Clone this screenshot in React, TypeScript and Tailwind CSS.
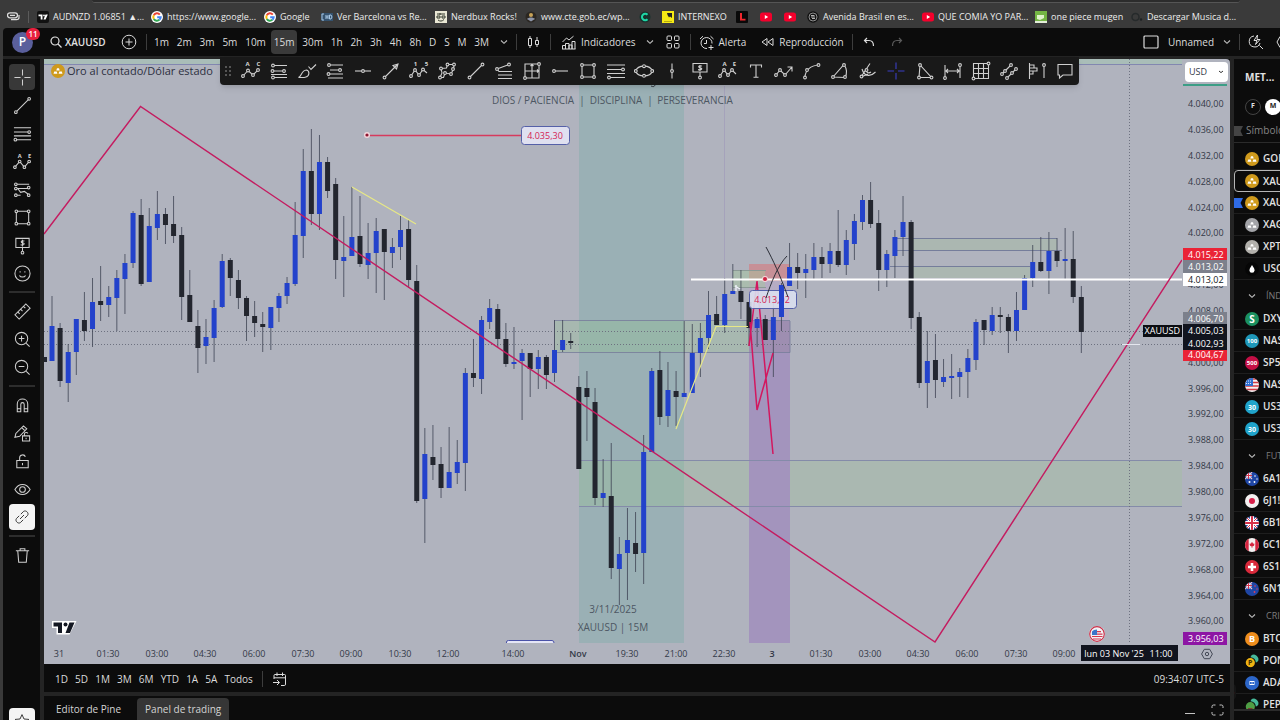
import React from "react";

type Pt = [number, number];

/* ---------- icon helper ---------- */

interface Glyph {
  name: string;
  d: string;
  dots?: Pt[];
  marks?: [string, number, number][];
  tone?: string;
}

function Draw({ g, className = "size-5" }: { g: Glyph; className?: string }) {
  return (
    <svg viewBox="0 0 20 20" className={className} fill="none" stroke={g.tone ?? "#cfcfcf"} strokeWidth="1.1" aria-hidden="true">
      <path d={g.d} />
      {g.dots?.map(([x, y], i) => <circle key={i} cx={x} cy={y} r="1.4" fill="#141414" />)}
      {g.marks?.map(([t, x, y]) => (
        <text key={t} x={x} y={y} fontSize="6" fontWeight="700" textAnchor="middle" fill="#d6d6d6" stroke="none">{t}</text>
      ))}
    </svg>
  );
}

function Chevron() {
  return (
    <svg viewBox="0 0 8 8" className="size-2 shrink-0" fill="none" stroke="#bdbdbd" strokeWidth="1.1" aria-hidden="true">
      <path d="M1 2.5 4 5.3 7 2.5" />
    </svg>
  );
}

/* ---------- drawing tools ---------- */

const favourites: Glyph[] = [
  { name: "Patrón ABC", d: "M2 15 7 9.5 12 14 17 9", dots: [[2, 15], [7, 9.5], [12, 14], [17, 9]], marks: [["A", 6.5, 5], ["C", 17.5, 5]] },
  { name: "Retroceso de Fibonacci", d: "M4 4.5H18M4 10H15M2 13.5H18M4 16.5H18", dots: [[4, 4.5], [3.5, 10], [15, 10], [4, 16.5]] },
  { name: "Pincel", d: "M1.500 16.500C5 15 4 9.500 9.500 9 13 10 12.500 15 9 16 7 16.800 4 16.500 1.500 16.500ZM11.500 5.500 14 8.500 19 3.500" },
  { name: "Extensión de Fibonacci", d: "M3 4H18M5 9H17M3 13H18M3 17H18", dots: [[4, 4], [15, 9], [3.5, 13]] },
  { name: "Línea horizontal", d: "M2 10H18", dots: [[10, 10]] },
  { name: "Flecha", d: "M3.500 16.500 17 3M12 4.500 17 3 15.500 8Z", dots: [[3.5, 16.5]] },
  { name: "Impulso de Elliott", d: "M2 15 6 9 10 14 14 8.500 18 12", dots: [[2, 15], [6, 9], [10, 14], [14, 8.5]], marks: [["1", 6.5, 5], ["5", 17.5, 5]] },
  { name: "Polilínea", d: "M4 7.500 9.500 7 10.500 3.500 17 3.500 16.500 8 14 13 8 12 6.500 16.500 3 16.500 5 12Z", dots: [[4, 7.5], [10.5, 3.5], [17, 3.5], [14, 13], [8, 12], [3, 16.5], [16, 8]] },
  { name: "Línea de tendencia", d: "M3.500 16.500 16.500 3.500", dots: [[3.5, 16.5], [16.5, 3.5]] },
  { name: "Tridente", d: "M3 8 15 3.500M3 8 5 10.500H18M4 14H18M4 17.500H18", dots: [[3, 8], [15, 3.5]] },
  { name: "Cuadrícula de Gann", d: "M3 3H17V17H3ZM10 3V17M3 10H17M8.500 5 10 3.500 11.500 5M15 8.500 16.500 10 15 11.500", dots: [[17, 3], [3, 17]] },
  { name: "Rayo horizontal", d: "M4 10H18", dots: [[4, 10]] },
  { name: "Rectángulo", d: "M4 4H16V16H4Z", dots: [[4, 4], [16, 4], [4, 16], [16, 16]] },
  { name: "Canal de Fibonacci", d: "M1 4H19M1 8.500H19M1 12.500H19M1 16.500H19", dots: [[17, 8.5], [3, 16.5]] },
  { name: "Elipse", d: "M1.500 10C4 3.500 16 3.500 18.500 10 16 16.500 4 16.500 1.500 10Z", dots: [[1.8, 10], [18.2, 10], [10, 5.2], [10, 14.8]] },
  { name: "Línea vertical", d: "M10 2.500V17.500", dots: [[10, 10]] },
  { name: "Etiqueta de precio", d: "M3 2.500H17V11H3ZM10 11V15M12 5C8 4 8 6.500 10 6.800 13 7 12 9.500 8 8.600M10 4V10", dots: [[10, 16.5]] },
  { name: "Patrón XABCD", d: "M2 15 6 9 10 14 14 9 18 13", dots: [[2, 15], [6, 9], [10, 14], [14, 9]], marks: [["A", 6.5, 5], ["E", 16.5, 5]] },
  { name: "Texto", d: "M4.500 6.500V4H15.500V6.500M10 4V16M7.500 16.200H12.500" },
  { name: "Trayectoria", d: "M2 14 6 9 11 14 17.500 6.500M13.500 6H18V10.500", dots: [[2, 14], [6, 9], [11, 14]] },
  { name: "Curva", d: "M3 16.500C3 9 9 4.500 16.500 4", dots: [[3, 16.5], [5, 9], [16.5, 4]] },
  { name: "Arco", d: "M3 16 14 3.500C17 8 17 13 15 16.500Z", dots: [[3, 16], [14, 4], [15, 16]] },
  { name: "Abanico de Fibonacci", d: "M3 16 12 2.500M3 16 10 13M4 8C6 15 12 16.500 17.500 11M8 9.500C9 12 11 12.500 13 11", dots: [[3.5, 15.5], [8.5, 9]] },
  { name: "Cruz", d: "M10 1.500V8M10 12V18.500M1.500 10H8M12 10H18.500", tone: "#3a3fc4" },
  { name: "Triángulo", d: "M5 4 4 16.500H16.500Z", dots: [[5, 4], [4, 16.5], [16.5, 16.5]] },
  { name: "Rango de fechas", d: "M2 4V17M17 4V17M2 10H17M5 8 3 10 5 12M14 8 16 10 14 12", dots: [[17, 4], [2, 17]] },
  { name: "Cuadrado de Gann", d: "M2.500 2.500H17.500V17.500H2.500ZM7.500 2.500V17.500M12.500 2.500V17.500M2.500 7.500H17.500M2.500 12.500H17.500", dots: [[17.5, 2.5], [2.5, 17.5]] },
  { name: "Canal paralelo", d: "M3 13 12 4M8 17 17 8", dots: [[3, 13], [12, 4], [8, 17], [17, 8], [6, 10], [13, 12]] },
  { name: "Perfil de volumen", d: "M2.500 2V18M2.500 4H7V7H2.500M2.500 7H10V10H2.500M2.500 10H6V13H2.500M17 5V17", dots: [[17, 4]] },
  { name: "Comentario", d: "M3 3.500H17V14H8L4.500 17V14H3Z" },
];

const sideA: Glyph[] = [
  { name: "Cursor", d: "M10 1.500V8M10 12V18.500M1.500 10H8M12 10H18.500" },
  { name: "Líneas", d: "M3 17 17 3", dots: [[3, 17], [17, 3]] },
  { name: "Fibonacci", d: "M1 4H19M1 8.500H19M1 12.500H19M1 16.500H19", dots: [[17, 8.5], [2.5, 16.5]] },
  { name: "Patrones", d: "M2 16 7 10 12 16 17 10", dots: [[2, 16], [7, 10], [12, 16], [17, 10]], marks: [["A", 7, 6], ["E", 17.5, 6]] },
  { name: "Previsión", d: "M3 4.500H17M3 9H17M3 16H8M5 9 8 13 12 12 16 15", dots: [[3, 4.5], [3, 9], [16.5, 8], [3, 16], [16.5, 16]] },
  { name: "Formas", d: "M3.500 3.500H16.500V16.500H3.500Z", dots: [[3.5, 3.5], [16.5, 3.5], [3.5, 16.5], [16.5, 16.5]] },
  { name: "Anotaciones", d: "M3 2.500H17V12H3ZM10 12V16M12 5.300C8 4.300 8 7 10 7.200 13 7.500 12 10 8 9.200M10 4V11", dots: [[10, 17.5]] },
  { name: "Iconos", d: "M18 10A8 8 0 1 1 2 10 8 8 0 0 1 18 10ZM7.500 7.500V9M12.500 7.500V9M6.800 12C8 14.300 12 14.300 13.200 12" },
];
const sideB: Glyph[] = [
  { name: "Medir", d: "M2 13.500 13.500 2 18 6.500 6.500 18ZM5 10.500 7 12.500M8 7.500 10 9.500M11 4.500 13 6.500" },
  { name: "Acercar", d: "M15.500 9A6.500 6.500 0 1 1 2.500 9 6.500 6.500 0 0 1 15.500 9ZM14 14 17.500 17.500M9 6V12M6 9H12" },
  { name: "Alejar", d: "M15.500 9A6.500 6.500 0 1 1 2.500 9 6.500 6.500 0 0 1 15.500 9ZM14 14 17.500 17.500M6 9H12" },
];
const sideC: Glyph[] = [
  { name: "Modo imán", d: "M4.500 16.500V8.500C4.500 1.500 15.500 1.500 15.500 8.500V16.500H11.800V9C11.800 6.300 8.200 6.300 8.200 9V16.500ZM4.500 13.500H8.200M11.800 13.500H15.500" },
  { name: "Seguir dibujando", d: "M2 14 3 10 11 2 14.500 5 7 13ZM9.500 4 12.500 7M10 12.500H17.500V18H10ZM12 12.500V10.500C12 8.500 15.500 8.500 15.500 10M13.800 14.500V16" },
  { name: "Bloquear dibujos", d: "M4 9H16V16.500H4ZM7 9V6C7 2.500 12 2 13 5M10 11.500V14" },
  { name: "Ocultar dibujos", d: "M2 10C6 3 14 3 18 10 14 17 6 17 2 10ZM13 10A3 3 0 1 1 7 10 3 3 0 0 1 13 10Z" },
];
const linkGlyph: Glyph = { name: "Enlazar", tone: "#222", d: "M8.500 6.500 12 3C15 1 19 5 17 8L13.500 11.500M11.500 13.500 8 17C5 19 1 15 3 12L6.500 8.500M7.500 12.500 12.500 7.500" };
const trashGlyph: Glyph = { name: "Eliminar", d: "M3 5H17M7.500 5V3H12.500V5M5 5 6 17H14L15 5" };
const starGlyph: Glyph = { name: "Favoritos", tone: "#222", d: "M10 2 12.500 7.500 18.500 8 14 12 15.500 18 10 15 4.500 18 6 12 1.500 8 7.500 7.500Z" };

function SideButton({ g }: { g: Glyph }) {
  return (
    <button type="button" aria-label={g.name} className="flex h-7 w-[26px] items-center justify-center">
      <Draw g={g} className="size-[19px]" />
    </button>
  );
}

function SideRule() {
  return <div className="my-1 h-[2px] w-[26px] bg-[#2d2d2d]" />;
}

function Sidebar() {
  return (
    <nav aria-label="Herramientas de dibujo" className="flex w-[41px] shrink-0 flex-col items-center border-r-4 border-[#242424] bg-[#0c0c0c] pt-1 pl-px">
      <div className="flex h-7 items-center rounded">
        <button type="button" aria-label={sideA[0].name} className="flex size-[26px] items-center justify-center rounded bg-[#383838]">
          <Draw g={sideA[0]} className="size-[19px]" />
        </button>
      </div>
      {sideA.slice(1).map((g) => <SideButton key={g.name} g={g} />)}
      <SideRule />
      {sideB.map((g) => <SideButton key={g.name} g={g} />)}
      <SideRule />
      {sideC.map((g) => <SideButton key={g.name} g={g} />)}
      <button type="button" aria-label={linkGlyph.name} className="my-px flex size-[26px] items-center justify-center rounded bg-[#f4f4f4]">
        <Draw g={linkGlyph} className="size-4" />
      </button>
      <SideRule />
      <SideButton g={trashGlyph} />
      <button type="button" aria-label={starGlyph.name} className="mt-auto -mb-3.5 flex size-[26px] items-center justify-center rounded bg-[#f4f4f4]">
        <Draw g={starGlyph} className="size-4" />
      </button>
    </nav>
  );
}

/* ---------- bookmarks ---------- */

function Fav({ kind }: { kind: string }) {
  return (
    <svg viewBox="0 0 12 12" className="size-3 shrink-0" aria-hidden="true">
      {kind === "tv" && (<><rect width="12" height="12" rx="2" fill="#111" /><path d="M1.500 3.500H5.500V8.500H3.700V5.200H1.500ZM8.500 3.500H10.800L8.600 8.500H6.500Z" fill="#fff" /><circle cx="7" cy="4.400" r=".9" fill="#fff" /></>)}
      {kind === "g" && (
        <g fill="none" strokeWidth="2">
          <circle cx="6" cy="6" r="6" fill="#fff" />
          <path d="M8.800 3.600A3.700 3.700 0 0 0 2.800 4.200" stroke="#ea4335" />
          <path d="M2.800 4.200A3.700 3.700 0 0 0 2.800 7.900" stroke="#fbbc05" />
          <path d="M2.800 7.900A3.700 3.700 0 0 0 8.400 8.800" stroke="#34a853" />
          <path d="M8.400 8.800A3.700 3.700 0 0 0 9.700 6.200H6.200" stroke="#4285f4" />
        </g>
      )}
      {kind === "hd" && (<><rect y="2" width="12" height="8" fill="#35526e" /><path d="M1 3V9M1 3H3M1 9H3M5 4V8M7 4V8M5 6H7M8.500 4V8H10L11 6 10 4Z" stroke="#a8c6e2" fill="none" /></>)}
      {kind === "nerd" && (<><rect width="12" height="12" fill="#e9e7d4" /><path d="M2 3H10M2 5H5V7H2ZM7 5H10V7H7ZM3 9C5 10.500 7 10.500 9 8.500M5 2V4" stroke="#33382c" fill="none" /></>)}
      {kind === "cte" && (<><circle cx="6" cy="6" r="5.500" fill="#2b2722" /><circle cx="6" cy="4" r="2" fill="#c7a258" /><path d="M2 8C4 6 8 6 10 8L6 10.500Z" fill="#8d95a8" /></>)}
      {kind === "c" && (<><circle cx="6" cy="6" r="5.500" fill="#17332d" /><path d="M8.500 3.800A3.200 3.200 0 1 0 8.500 8.200" fill="none" stroke="#1fd6a6" strokeWidth="2" /></>)}
      {kind === "y" && (<><rect width="12" height="12" fill="#f6ea15" /><path d="M5 2H10V7L8 5.500 7 6.500 5.500 4Z" fill="#222" /><path d="M2 10.500H10" stroke="#b5ac10" /></>)}
      {kind === "l" && (<><rect width="12" height="12" rx="1" fill="#090909" /><path d="M4 2V9.500H9.500V7.800H6V2Z" fill="#f0272d" /></>)}
      {kind === "yt" && (<><rect y="1.500" width="12" height="9" rx="2.500" fill="#f4002c" /><path d="M4.800 4V8L8.200 6Z" fill="#fff" /></>)}
      {kind === "a" && (<><circle cx="6" cy="6" r="5.800" fill="#121212" /><circle cx="6" cy="6" r="4" fill="none" stroke="#8b8b8b" /><path d="M4 4.500H7.500M4 6H8M5 7.500H8" stroke="#b5b5b5" /></>)}
      {kind === "p" && (<><rect width="12" height="12" fill="#74b544" /><path d="M2 4H9V7L5 9 2 8Z" fill="#dff2cb" /><path d="M0 11H12" stroke="#e2edd8" strokeWidth="2" /></>)}
      {kind === "d" && (<><circle cx="4.500" cy="6" r="3.500" fill="none" stroke="#262a2b" strokeWidth="1.500" /><circle cx="10" cy="8.500" r="1.200" fill="#1c2021" /></>)}
    </svg>
  );
}

const bookmarks: { kind: string; label: string; aria?: string; w: string }[] = [
  { kind: "tv", label: "AUDNZD 1.06851 ▲...", w: "w-[114px]" },
  { kind: "g", label: "https://www.google...", w: "w-[113px]" },
  { kind: "g", label: "Google", w: "w-[57px]" },
  { kind: "hd", label: "Ver Barcelona vs Re...", w: "w-[114px]" },
  { kind: "nerd", label: "Nerdbux Rocks!", w: "w-[90px]" },
  { kind: "cte", label: "www.cte.gob.ec/wp...", w: "w-[114px]" },
  { kind: "c", label: "", aria: "C", w: "w-[23px]" },
  { kind: "y", label: "INTERNEXO", w: "w-[74px]" },
  { kind: "l", label: "", aria: "L", w: "w-6" },
  { kind: "yt", label: "", aria: "YouTube", w: "w-6" },
  { kind: "yt", label: "", aria: "YouTube", w: "w-[23px]" },
  { kind: "a", label: "Avenida Brasil en es...", w: "w-[115px]" },
  { kind: "yt", label: "QUE COMIA YO PAR...", w: "w-[113px]" },
  { kind: "p", label: "one piece mugen", w: "w-24" },
  { kind: "d", label: "Descargar Musica d...", w: "w-[114px]" },
];

function BookmarksBar() {
  return (
    <header className="flex h-7 shrink-0 flex-col bg-[#3a3a3a]">
      <div className="mr-10 ml-[92px] h-[3px] shrink-0 rounded-b-md border-b border-[#555] bg-[#2c2c2c]" />
      <div className="flex flex-1 items-center pl-[7px] pt-0.5">
        <svg viewBox="0 0 13 9" className="h-[9px] w-[13px] shrink-0" fill="none" stroke="#dcdcdc" aria-hidden="true">
          <rect x=".5" y=".8" width="10" height="5" rx="2.500" strokeWidth="1.300" />
          <path d="M3 3.400H8M12 3V5.500C12 7 11 7.700 9.500 7.700H4" strokeWidth="1.200" />
        </svg>
        <div className="ml-2 mr-2 h-3 w-px bg-[#5b5b5b]" />
        {bookmarks.map((b, i) => (
          <a key={i} href="#" aria-label={b.aria} className={b.w + " flex shrink-0 items-center gap-1 text-[9px] whitespace-nowrap text-[#ececec]"}>
            <Fav kind={b.kind} />
            {b.label}
          </a>
        ))}
      </div>
    </header>
  );
}

/* ---------- top bar ---------- */

const intervals = ["1m", "2m", "3m", "5m", "10m", "15m", "30m", "1h", "2h", "3h", "4h", "8h", "D", "S", "M", "3M"];

function Rule() {
  return <div className="h-4 w-px shrink-0 bg-[#3d3d3d]" />;
}

function TopBar() {
  return (
    <div className="flex h-7 shrink-0 items-center rounded-tl bg-[#0c0c0c] pl-[9px] text-[10px] font-medium whitespace-nowrap text-[#dcdcdc]">
      <button type="button" aria-label="Perfil" className="relative mr-[17px] size-[21px] shrink-0 rounded-full bg-[#5a5f9c] text-[12px] leading-5 font-semibold text-white">
        P
        <span className="absolute -top-1 left-3.5 h-3 w-[14px] rounded-full bg-[#e8203e] text-center text-[8px] leading-3">11</span>
      </button>
      <button type="button" className="flex w-[71px] shrink-0 items-center gap-[3px] font-semibold text-[#e2e2e2]">
        <svg viewBox="0 0 12 12" className="size-3" fill="none" stroke="currentColor" strokeWidth="1.200" aria-hidden="true"><circle cx="5" cy="5" r="4" /><path d="M8 8 11.500 11.500" /></svg>
        XAUUSD
      </button>
      <button type="button" aria-label="Comparar símbolo" className="mr-[9px]">
        <svg viewBox="0 0 16 16" className="size-4" fill="none" stroke="currentColor" aria-hidden="true"><circle cx="8" cy="8" r="6.800" /><path d="M8 4.500V11.500M4.500 8H11.500" /></svg>
      </button>
      <Rule />
      <div className="ml-1 flex w-[341px] shrink-0 items-center justify-between">
        {intervals.map((t) =>
          t === "15m" ? (
            <button key={t} type="button" aria-pressed="true" className="h-6 rounded bg-[#3a3a3a] px-[3px]">{t}</button>
          ) : (
            <button key={t} type="button" className="h-6 px-[3px]">{t}</button>
          ),
        )}
      </div>
      <button type="button" aria-label="Más intervalos" className="ml-2"><Chevron /></button>
      <div className="ml-2"><Rule /></div>
      <button type="button" aria-label="Tipo de gráfico" className="mx-2.5">
        <svg viewBox="0 0 13 14" className="h-[14px] w-[13px]" fill="none" stroke="currentColor" aria-hidden="true"><path d="M1.500 3.500H4.500V10.500H1.500ZM3 1V3.500M3 10.500V13M8.500 5.500H11.500V9.500H8.500ZM10 2V5.500M10 9.500V12" /></svg>
      </button>
      <Rule />
      <button type="button" className="ml-2.5 flex items-center gap-[5px]">
        <svg viewBox="0 0 15 15" className="size-[15px]" fill="none" stroke="currentColor" aria-hidden="true"><path d="M1.500 14V10.500H4.500V14M4.500 14V8.500H8V14M8 14V10H11V14M11 14V6.500H14V14M1 14H14.500M1.500 7 5.500 3 8 5 12.500 1.200" /></svg>
        Indicadores
      </button>
      <button type="button" aria-label="Favoritos de indicadores" className="ml-2.5"><Chevron /></button>
      <button type="button" aria-label="Plantillas" className="ml-3">
        <svg viewBox="0 0 14 14" className="size-[14px]" fill="none" stroke="currentColor" aria-hidden="true"><rect x="1" y="1" width="4.500" height="4.500" rx="1" /><rect x="8.500" y="1" width="4.500" height="4.500" rx="1" /><rect x="1" y="8.500" width="4.500" height="4.500" rx="1" /><rect x="8.500" y="8.500" width="4.500" height="4.500" rx="1" /></svg>
      </button>
      <div className="mr-2 ml-2.5"><Rule /></div>
      <button type="button" className="flex items-center gap-[5px]">
        <svg viewBox="0 0 15 15" className="size-[15px]" fill="none" stroke="currentColor" aria-hidden="true"><path d="M13 8.500A5.500 5.500 0 1 0 8 13.500M7.500 5V8.500H5M1 4 4 1.200M11.500 1.200 14.500 4M12 10V15M9.500 12.500H14.500" /></svg>
        Alerta
      </button>
      <button type="button" className="ml-[15px] flex items-center gap-[5px]">
        <svg viewBox="0 0 13 10" className="h-2.5 w-[13px]" fill="none" stroke="currentColor" aria-hidden="true"><path d="M6 1.500V8.500L1 5ZM12 1.500V8.500L7 5Z" /></svg>
        Reproducción
      </button>
      <div className="mr-2.5 ml-2"><Rule /></div>
      <button type="button" aria-label="Deshacer">
        <svg viewBox="0 0 12 10" className="h-2.5 w-3" fill="none" stroke="currentColor" strokeWidth="1.200" aria-hidden="true"><path d="M4 1 1.500 3.500 4 6M1.500 3.500H6C9 3.500 10.500 5.500 10.500 9" /></svg>
      </button>
      <button type="button" aria-label="Rehacer" className="ml-4 text-[#5a5a5a]">
        <svg viewBox="0 0 12 10" className="h-2.5 w-3" fill="none" stroke="currentColor" strokeWidth="1.200" aria-hidden="true"><path d="M8 1 10.500 3.500 8 6M10.500 3.500H6C3 3.500 1.500 5.500 1.500 9" /></svg>
      </button>
      <div className="ml-auto flex items-center">
        <button type="button" className="flex items-center gap-[9px]">
          <svg viewBox="0 0 16 14" className="h-[14px] w-4" fill="none" stroke="currentColor" strokeWidth="1.200" aria-hidden="true"><rect x="1" y="1" width="14" height="12" rx="1" /></svg>
          Unnamed
          <Chevron />
        </button>
        <div className="mr-2 ml-2"><Rule /></div>
        <button type="button" aria-label="Búsqueda rápida">
          <svg viewBox="0 0 16 16" className="size-4" fill="none" stroke="currentColor" aria-hidden="true"><path d="M6 2A5.500 5.500 0 1 0 12 9M11.500 11.500 15 15M9.500 1 6 6.500H9L7.500 10.500 12 5.500H9Z" /></svg>
        </button>
        <button type="button" aria-label="Ajustes" className="ml-3 w-1 overflow-hidden">
          <svg viewBox="0 0 14 14" className="size-[14px]" fill="none" stroke="currentColor" aria-hidden="true"><path d="M4 1.500H10L13 7 10 12.500H4L1 7Z" /></svg>
        </button>
      </div>
    </div>
  );
}

/* ---------- chart ---------- */

const X0 = 52;
const STEP = 8.105;

/* [high, body top, body bottom, low, direction] in plot units; 1 = up, 0 = down */
const candles: number[][] = [
  [296, 326, 361, 361, 1], [323, 328, 381, 387, 0], [344, 352, 383, 402, 1], [319, 319, 352, 375, 1], [292, 320, 331, 341, 0],
  [278, 302, 329, 347, 1], [266, 301, 305, 321, 0], [286, 297, 305, 317, 1], [270, 278, 298, 331, 1], [254, 263, 279, 314, 1],
  [211, 213, 263, 268, 1], [199, 215, 284, 286, 0], [208, 226, 282, 282, 1], [191, 214, 228, 240, 1], [208, 214, 225, 244, 0],
  [196, 224, 236, 243, 0], [227, 235, 297, 320, 0], [270, 295, 322, 322, 0], [310, 326, 348, 373, 0], [319, 337, 346, 364, 1],
  [300, 308, 338, 362, 1], [254, 261, 307, 308, 1], [258, 260, 278, 296, 0], [270, 280, 298, 309, 0], [296, 298, 316, 341, 0],
  [301, 316, 323, 337, 0], [312, 324, 327, 352, 0], [307, 307, 328, 350, 1], [293, 296, 308, 322, 1], [277, 283, 296, 304, 1],
  [202, 235, 284, 286, 1], [149, 171, 236, 258, 1], [129, 171, 214, 225, 0], [135, 162, 214, 230, 1], [157, 162, 191, 198, 0],
  [178, 184, 260, 279, 0], [216, 257, 261, 297, 1], [187, 237, 256, 256, 1], [196, 236, 264, 267, 0], [223, 253, 265, 279, 1],
  [218, 231, 253, 293, 1], [229, 229, 252, 300, 0], [238, 247, 253, 268, 1], [216, 230, 247, 260, 1], [220, 229, 280, 288, 0],
  [265, 281, 501, 503, 0], [428, 454, 499, 543, 1], [425, 457, 465, 480, 0], [447, 464, 488, 498, 0], [427, 472, 488, 488, 1],
  [440, 462, 473, 484, 1], [368, 373, 463, 491, 1], [339, 373, 378, 387, 0], [316, 320, 379, 394, 1], [299, 308, 322, 329, 1],
  [304, 309, 339, 347, 0], [323, 339, 364, 367, 0], [327, 362, 364, 369, 1], [349, 353, 361, 420, 1], [353, 353, 369, 397, 0],
  [350, 357, 369, 389, 1], [355, 357, 375, 389, 0], [320, 350, 373, 382, 1], [320, 340, 350, 352, 1], [333, 341, 343, 349, 0],
  [376, 387, 469, 469, 0], [371, 388, 397, 441, 0], [388, 402, 498, 505, 0], [459, 493, 498, 507, 1], [443, 496, 568, 579, 0],
  [537, 554, 569, 605, 1], [508, 540, 553, 600, 1], [512, 543, 554, 572, 0], [435, 452, 553, 584, 1], [368, 371, 452, 452, 1],
  [351, 370, 417, 425, 0], [362, 390, 416, 427, 1], [371, 391, 397, 426, 0], [321, 393, 397, 397, 1], [324, 353, 393, 393, 1],
  [323, 338, 353, 377, 1], [291, 315, 338, 349, 1], [296, 314, 325, 325, 0], [278, 294, 325, 333, 1], [264, 291, 294, 294, 1],
  [270, 291, 302, 319, 0], [302, 302, 328, 346, 0], [317, 319, 328, 347, 1], [315, 319, 340, 340, 0], [300, 317, 340, 377, 1],
  [283, 285, 317, 331, 1], [243, 267, 286, 286, 1], [253, 267, 273, 289, 0], [254, 269, 273, 298, 1], [243, 257, 270, 279, 1],
  [247, 257, 264, 278, 0], [243, 251, 264, 273, 1], [210, 251, 265, 267, 0], [230, 240, 265, 275, 1], [214, 221, 244, 260, 1],
  [195, 200, 222, 230, 1], [182, 200, 224, 228, 0], [210, 223, 270, 291, 0], [250, 254, 270, 287, 1], [230, 237, 256, 278, 1],
  [196, 222, 237, 256, 1], [220, 222, 318, 329, 0], [312, 317, 383, 388, 0], [331, 361, 383, 408, 1], [334, 360, 380, 398, 0],
  [359, 377, 382, 387, 1], [354, 376, 378, 399, 1], [368, 372, 377, 397, 1], [349, 358, 372, 398, 1], [319, 322, 360, 370, 1],
  [320, 320, 330, 345, 0], [307, 315, 331, 335, 1], [307, 315, 317, 333, 0], [314, 317, 331, 353, 0], [292, 310, 331, 341, 1],
  [275, 278, 310, 310, 1], [245, 262, 278, 287, 1], [237, 262, 271, 272, 0], [232, 251, 271, 294, 1], [238, 251, 261, 267, 0],
  [228, 259, 261, 280, 1], [231, 259, 297, 303, 0], [286, 297, 332, 353, 0],
];

const times: [string, number][] = [
  ["31", 59], ["01:30", 108], ["03:00", 157], ["04:30", 205], ["06:00", 254], ["07:30", 303], ["09:00", 351], ["10:30", 400],
  ["12:00", 448], ["14:00", 513], ["Nov", 578], ["19:30", 627], ["21:00", 676], ["22:30", 724], ["3", 772], ["01:30", 821],
  ["03:00", 870], ["04:30", 918], ["06:00", 967], ["07:30", 1016], ["09:00", 1064],
];

function Plot() {
  return (
    <svg viewBox="44 59 1138 605" preserveAspectRatio="xMinYMin meet" className="min-w-0 flex-1" role="img" aria-label="Gráfico XAUUSD 15 minutos">
      <rect x="44" y="59" width="1138" height="5" fill="#a9bdb8" />
      <path d="M44 64.500H1182" stroke="#8287b0" strokeWidth="1" />

      <rect x="579" y="59" width="105" height="584" fill="#9ab0b5" />
      <rect x="555" y="321" width="194" height="31" fill="#8fc48b" fillOpacity=".28" />
      <rect x="749" y="321" width="41" height="322" fill="#a394bd" />
      <rect x="749" y="321" width="41" height="31" fill="#96849f" fillOpacity=".4" />
      <rect x="749" y="264" width="40" height="17" fill="#cb8a90" fillOpacity=".85" />
      <rect x="749" y="281" width="40" height="40" fill="#b9a9c4" fillOpacity=".7" />
      <rect x="579" y="460" width="170" height="47" fill="#9cc596" fillOpacity=".3" />
      <rect x="790" y="460" width="392" height="47" fill="#9cc596" fillOpacity=".3" />
      <path d="M579 460.500H1182M579 506.500H1182" stroke="#848ba9" />
      <path d="M554.500 352.500V320.500H790M554.500 352.500H790V321" stroke="#767c98" fill="none" strokeOpacity=".8" />
      <rect x="733" y="270" width="32" height="17" fill="#a5c79c" fillOpacity=".45" />
      <path d="M733 270.500H766M733 287.500H766" stroke="#8b9a95" />
      <rect x="911" y="239" width="146" height="11" fill="#a3c09c" fillOpacity=".35" />
      <rect x="911" y="267" width="119" height="11" fill="#a3c09c" fillOpacity=".35" />
      <path d="M897 238.500H1057M897 250.500H1062M890 266.500H1030" stroke="#757d9b" />
      <path d="M724.500 86V280" stroke="#a5a2bb" />

      <g fill="#4d5763" fontSize="10" textAnchor="middle">
        <text x="533" y="103.500">DIOS / PACIENCIA</text>
        <text x="582" y="103.500">|</text>
        <text x="616" y="103.500">DISCIPLINA</text>
        <text x="650" y="103.500">|</text>
        <text x="695" y="103.500">PERSEVERANCIA</text>
        <text x="613" y="612.500">3/11/2025</text>
        <text x="613" y="630.500">XAUUSD | 15M</text>
      </g>
      <path d="M655 84C655 87 653 87 651 86" stroke="#2b2f38" fill="none" />

      <path d="M44 331.500H1182M44 344.500H1182M1129.500 59V643" stroke="#6d7180" strokeDasharray="1 2" />

      <rect x="44" y="357" width="3" height="5" fill="#23262f" />
      {candles.map(([h, t, b, l, up], i) => {
        const x = X0 + i * STEP;
        return (
          <g key={i}>
            <path d={`M${x} ${h}V${l}`} stroke="#3f4454" strokeOpacity=".8" />
            <rect x={x - 2.5} y={t} width="5" height={Math.max(b - t, 2)} fill={up ? "#2342cb" : "#23262f"} />
          </g>
        );
      })}

      <path d="M691 279.500H1182" stroke="#fff" strokeWidth="1.800" />
      <path d="M44 234 140.500 106.500 935 642 1182 260" stroke="#c41c60" strokeWidth="1.400" fill="none" />
      <path d="M352 187 416 224M676 429 716 326.500H748" stroke="#e7e886" strokeWidth="1.200" fill="none" />
      <path d="M736 291V285M735 286 740 289" stroke="#eef1f8" strokeWidth="1.400" />

      <path d="M749 346 757 281 773 454M750 322 757 410 773 353" stroke="#d3175f" strokeWidth="1.500" fill="none" />
      <rect x="749.500" y="290.500" width="47" height="18" rx="3" fill="#dadff0" fillOpacity=".9" stroke="#5560a8" />
      <text x="772" y="303" fontSize="9" textAnchor="middle" fill="#d42454">4.013,02</text>
      <rect x="779" y="285" width="5" height="32" fill="#2342cb" />
      <path d="M766 247C773 260 780 275 788 297M787 256C778 265 771 283 766 298" stroke="#2c2f38" fill="none" />
      <circle cx="765" cy="279" r="3" fill="#f6d7dc" />
      <circle cx="765" cy="279" r="2" fill="#cc2340" />

      <path d="M367 135.500H521" stroke="#d63a5e" strokeWidth="1.300" />
      <circle cx="367" cy="135" r="3" fill="#f3d6dc" />
      <circle cx="367" cy="135" r="1.600" fill="#8e1530" />
      <rect x="521.500" y="126.500" width="48" height="18" rx="3" fill="#dfe0f0" stroke="#5560a8" />
      <text x="545" y="138.500" fontSize="9" textAnchor="middle" fill="#d42454">4.035,30</text>
      <path d="M506.500 643V642Q506.500 640.500 508.500 640.500H552Q554 640.500 554 643" fill="#e5e6f6" stroke="#4a52a8" />

      <path d="M1122 344.500H1140" stroke="#e4e6ee" />

      <g fill="#131722">
        <path d="M52 621H76.500L69.500 634.500H56.500V628H52Z" fill="#fff" />
        <path d="M53.500 622.500H62V633H58V626.500H53.500ZM69.500 622.500H74.500L70 633H65.500Z" />
        <circle cx="65.500" cy="624.500" r="2" />
      </g>

      <g>
        <circle cx="1097" cy="634" r="8" fill="#f2f2f4" />
        <circle cx="1097" cy="634" r="7.300" fill="none" stroke="#c9304a" strokeWidth="1.200" />
        <path d="M1092 636.500H1102.500M1093 639H1101M1097 634.200H1102.500M1097 631.700H1101" stroke="#d43950" strokeWidth="1.200" />
        <path d="M1092 635V631.500Q1093.500 629.500 1097 629.500V635Z" fill="#3975c9" />
      </g>

      <g fill="#333947" fontSize="9" textAnchor="middle">
        {times.map(([t, x]) => (
          <text key={x} x={x} y="657" fontWeight={t === "Nov" || t === "3" ? 600 : 400}>{t}</text>
        ))}
      </g>
      <rect x="1081" y="645" width="97" height="16" fill="#11141e" />
      <text x="1114" y="657" fontSize="9" fontWeight="500" textAnchor="middle" fill="#fff">lun 03 Nov '25</text>
      <text x="1161" y="657" fontSize="9" fontWeight="500" textAnchor="middle" fill="#fff">11:00</text>
    </svg>
  );
}

/* blank entries are ticks fully covered by price flags */
const prices = [
  "4.040,00", "4.036,00", "4.032,00", "4.028,00", "4.024,00", "4.020,00", "", "4.012,00", "4.008,00", "", "4.000,00",
  "3.996,00", "3.992,00", "3.988,00", "3.984,00", "3.980,00", "3.976,00", "3.972,00", "3.968,00", "3.964,00", "3.960,00",
];

/* price flags pinned at their level on the scale */
const flags: [string, string][] = [
  ["4.015,22", "top-[189px] bg-[#ea2336] text-white"],
  ["4.013,02", "top-[201px] bg-[#7c808c] text-white"],
  ["4.013,02", "top-[214px] bg-white text-[#131722]"],
  ["4.004,67", "top-[289px] bg-[#ea2336] text-white"],
  ["4.006,70", "top-[253px] bg-[#7c808c] text-white"],
  ["4.005,03", "top-[265px] bg-[#11141e] text-white"],
  ["4.002,93", "top-[278px] bg-[#11141e] text-white"],
  ["3.956,03", "top-[573px] bg-[#8d16a4] text-white"],
];

function PriceScale() {
  return (
    <div className="relative flex w-12 shrink-0 flex-col pl-px text-[9px] text-[#333947]">
      <div className="flex h-8 shrink-0 flex-col items-start pt-[3px]">
        <label className="relative ml-0.5 block h-5">
          <span className="sr-only">Divisa</span>
          <select className="block h-5 w-[43px] appearance-none rounded-sm bg-white py-0 pl-1 text-[9px] leading-4 text-[#333947]">
            <option>USD</option>
          </select>
          <svg viewBox="0 0 6 4" className="absolute right-1 top-2 h-1 w-1.5" fill="none" stroke="#333" aria-hidden="true"><path d="M1 1 3 2.600 5 1" /></svg>
        </label>
        <div className="mt-[2px] h-[2px] w-11 bg-[#3c9e86]" />
      </div>
      <ol className="flex h-[543px] shrink-0 flex-col">
        {prices.map((p, i) => <li key={i} className="flex flex-1 items-center pl-[5px]">{p}</li>)}
      </ol>
      <button type="button" aria-label="Ajustes de escala" className="mt-[14px] ml-[18px] size-3">
        <svg viewBox="0 0 12 12" className="size-3" fill="none" stroke="#444956" aria-hidden="true"><path d="M3.300 1.300H8.700L11.400 6 8.700 10.700H3.300L.6 6Z" /><circle cx="6" cy="6" r="1.700" /></svg>
      </button>
      {flags.map(([p, c], i) => (
        <span key={i} className={c + " absolute left-px h-[13px] w-11 pl-[5px] text-[9px] leading-[13px] font-medium"}>{p}</span>
      ))}
      <span className="absolute right-12 top-[266px] h-3 bg-[#0b0d12] px-0.5 text-[9px] leading-3 font-medium text-white">XAUUSD</span>
    </div>
  );
}

function Gold({ tone }: { tone: string }) {
  return (
    <svg viewBox="0 0 14 14" className="size-[14px] shrink-0" aria-hidden="true">
      <circle cx="7" cy="7" r="7" fill={tone} />
      <path d="M5.300 6.500 6 4.200H8L8.700 6.500ZM2.500 9.800 3.200 7.500H5.700L6.400 9.800ZM7.600 9.800 8.300 7.500H10.800L11.500 9.800Z" fill="#fff" />
    </svg>
  );
}

function Chart() {
  return (
    <section className="relative flex min-h-0 flex-1 rounded-t bg-[#b0b3be]">
      <Plot />
      <PriceScale />
      <div className="absolute left-[7px] top-1 flex items-center gap-[2px] text-[11px] whitespace-nowrap text-[#2c3040]">
        <Gold tone="#cf9a1c" />
        <h1>Oro al contado/Dólar estado</h1>
      </div>
      <div role="toolbar" aria-label="Dibujos favoritos" className="absolute -top-0.5 left-44 flex h-7 w-[859px] items-center rounded-b bg-[#191919] shadow-md">
        <svg viewBox="0 0 17 12" className="h-3 w-[17px] shrink-0" fill="#555" aria-hidden="true">
          {[1, 5, 9].map((y) => <path key={y} d={`M5 ${y}h2v2h-2ZM9 ${y}h2v2h-2Z`} />)}
        </svg>
        {favourites.map((g) => (
          <button key={g.name} type="button" aria-label={g.name} className="flex h-7 flex-1 items-center justify-center">
            <Draw g={g} className="size-5" />
          </button>
        ))}
      </div>
    </section>
  );
}

/* ---------- bottom bars ---------- */

const ranges = ["1D", "5D", "1M", "3M", "6M", "YTD", "1A", "5A", "Todos"];

function RangeBar() {
  return (
    <div className="mt-0.5 flex h-[26px] shrink-0 items-center bg-[#0c0c0c] px-1.5 text-[10px] font-medium text-[#dcdcdc]">
      <div className="ml-0.5 flex w-[204px] justify-between">
        {ranges.map((r) => <button key={r} type="button" className="px-[3px]">{r}</button>)}
      </div>
      <div className="ml-1.5 mr-[9px]"><Rule /></div>
      <button type="button" aria-label="Ir a la fecha">
        <svg viewBox="0 0 15 15" className="size-[15px]" fill="none" stroke="currentColor" aria-hidden="true"><path d="M2 7V3.500Q2 2.500 3 2.500H12.500Q13.500 2.500 13.500 3.500V12Q13.500 13.500 12.500 13.500H9M2 5.800H13.500M5 .5V4M10.500 .5V4M1 10.500H7M5 8 7.500 10.500 5 13" /></svg>
      </button>
      <span className="ml-auto">09:34:07 UTC-5</span>
    </div>
  );
}

function PanelTabs() {
  return (
    <div className="flex h-7 shrink-0 items-end border-t-4 border-[#242424] bg-[#0c0c0c] text-[10px] font-medium text-[#d4d4d4]">
      <button type="button" className="h-[22px] px-3">Editor de Pine</button>
      <button type="button" aria-pressed="true" className="ml-1 h-[22px] rounded-t bg-[#363636] px-2">Panel de trading</button>
      <div className="ml-auto flex items-end gap-4 pr-1.5 pb-1">
        <button type="button" aria-label="Minimizar" className="mb-0.5 h-px w-2.5 bg-[#c4c4c4]" />
        <button type="button" aria-label="Maximizar">
          <svg viewBox="0 0 13 12" className="h-3 w-[13px]" fill="none" stroke="#c4c4c4" aria-hidden="true"><path d="M1 4V2.500Q1 1 2.500 1H4.500M8.500 1H10.500Q12 1 12 2.500V4M12 8V9.500Q12 11 10.500 11H8.500M4.500 11H2.500Q1 11 1 9.500V8" /></svg>
        </button>
      </div>
    </div>
  );
}

/* ---------- watchlist ---------- */

function Coin({ kind }: { kind: string }) {
  if (kind === "gold") return <Gold tone="#cf9a1c" />;
  if (kind === "silver") return <Gold tone="#a3a4a8" />;
  if (kind === "plat") return <Gold tone="#b3b1ac" />;
  return (
    <svg viewBox="0 0 14 14" className="size-[14px] shrink-0 rounded-full" aria-hidden="true">
      {kind === "oil" && (<><circle cx="7" cy="7" r="7" fill="#060606" /><path d="M7 3C9 6 9.500 7 9.500 8.300A2.500 2.500 0 0 1 4.500 8.300C4.500 7 5 6 7 3Z" fill="#fff" /></>)}
      {kind === "dxy" && (<><rect width="14" height="14" fill="#1b9160" /><text x="7" y="10.600" fontSize="10" fontWeight="700" textAnchor="middle" fill="#fff">S</text></>)}
      {kind === "100" && (<><rect width="14" height="14" fill="#1e97b8" /><text x="7" y="9.200" fontSize="6" fontWeight="700" textAnchor="middle" fill="#fff">100</text></>)}
      {kind === "500" && (<><rect width="14" height="14" fill="#c40f45" /><text x="7" y="9.200" fontSize="6" fontWeight="700" textAnchor="middle" fill="#fff">500</text></>)}
      {kind === "30" && (<><rect width="14" height="14" fill="#20a4cb" /><text x="7" y="9.500" fontSize="7" fontWeight="700" textAnchor="middle" fill="#fff">30</text></>)}
      {kind === "us" && (<><rect width="14" height="14" fill="#f4f1f1" /><path d="M0 1H14M0 4.500H14M0 8H14M0 11.500H14" stroke="#d23a45" strokeWidth="1.700" /><rect width="8" height="8" fill="#2f6fd0" /><path d="M1 3H7M1 5.500H7" stroke="#dbe7fa" strokeDasharray="1 1" /></>)}
      {(kind === "au" || kind === "nz") && (<><rect width="14" height="14" fill="#1f46a5" /><path d="M0 0 7 7M7 0 0 7" stroke="#f1c9d0" strokeWidth="1.200" /><path d="M3.500 0V7M0 3.500H7" stroke="#fff" strokeWidth="2" /><path d="M3.500 0V7M0 3.500H7" stroke="#d5304a" /><circle cx="10" cy="4" r=".8" fill={kind === "au" ? "#fff" : "#e2405a"} /><circle cx="9.500" cy="10" r=".9" fill={kind === "au" ? "#fff" : "#e2405a"} /><circle cx="4.500" cy="10" r="1" fill={kind === "au" ? "#fff" : "#1f46a5"} /><circle cx="12" cy="7" r=".7" fill={kind === "au" ? "#fff" : "#e2405a"} /></>)}
      {kind === "jp" && (<><rect width="14" height="14" fill="#f3f0f0" /><circle cx="7" cy="7" r="3" fill="#d81f49" /></>)}
      {kind === "gb" && (<><rect width="14" height="14" fill="#2a4a9c" /><path d="M0 0 14 14M14 0 0 14" stroke="#fff" strokeWidth="2.500" /><path d="M0 0 14 14M14 0 0 14" stroke="#d5304a" /><path d="M7 0V14M0 7H14" stroke="#fff" strokeWidth="4" /><path d="M7 0V14M0 7H14" stroke="#d5304a" strokeWidth="2" /></>)}
      {kind === "ca" && (<><rect width="14" height="14" fill="#f3f0f0" /><path d="M0 0H3.700V14H0ZM10.300 0H14V14H10.300ZM7 3.800 8 5.500 9.500 5.700 9 7.800 7.300 8.500V10H6.700V8.500L5 7.800 4.500 5.700 6 5.500Z" fill="#d5243f" /></>)}
      {kind === "ch" && (<><rect width="14" height="14" fill="#d8293b" /><path d="M7 3V11M3 7H11" stroke="#fff" strokeWidth="2.600" /></>)}
      {kind === "btc" && (<><rect width="14" height="14" fill="#ef8e1d" /><text x="7" y="10.300" fontSize="9" fontWeight="700" textAnchor="middle" fill="#fff">B</text></>)}
      {kind === "pon" && (<><circle cx="9.500" cy="4.500" r="4.300" fill="#46b99a" /><circle cx="5.500" cy="8.500" r="5.300" fill="#0c0c0c" /><circle cx="5.300" cy="8.700" r="4.600" fill="#eeb313" /><text x="5.300" y="11.300" fontSize="7" fontWeight="700" textAnchor="middle" fill="#3b2d05">P</text></>)}
      {kind === "ada" && (<><rect width="14" height="14" fill="#2c66c9" /><path d="M4.500 5.500H9.500M4.500 8.500H9.500M4 7H5M9 7H10M6.500 7H7.500" stroke="#fff" /></>)}
      {kind === "pep" && (<><circle cx="9.500" cy="4.500" r="4.300" fill="#46b99a" /><circle cx="5.500" cy="8.500" r="5.300" fill="#0c0c0c" /><circle cx="5.300" cy="8.700" r="4.600" fill="#4f9e45" /><path d="M3 10.500H7.500" stroke="#7a3d2c" /></>)}
    </svg>
  );
}

interface Group { title?: string; rows: { kind: string; name: string; mark?: "sel" | "flag" }[] }

const groups: Group[] = [
  { rows: [{ kind: "gold", name: "GOLD" }, { kind: "gold", name: "XAUUSD", mark: "sel" }, { kind: "gold", name: "XAUEUR", mark: "flag" }, { kind: "silver", name: "XAGUSD" }, { kind: "plat", name: "XPTUSD" }, { kind: "oil", name: "USOIL" }] },
  { title: "ÍNDICES", rows: [{ kind: "dxy", name: "DXY" }, { kind: "100", name: "NAS100" }, { kind: "500", name: "SP500" }, { kind: "us", name: "NASDAQ" }, { kind: "30", name: "US30" }, { kind: "30", name: "US30" }] },
  { title: "FUTUROS", rows: [{ kind: "au", name: "6A1!" }, { kind: "jp", name: "6J1!" }, { kind: "gb", name: "6B1!" }, { kind: "ca", name: "6C1!" }, { kind: "ch", name: "6S1!" }, { kind: "nz", name: "6N1!" }] },
  { title: "CRIPTO", rows: [{ kind: "btc", name: "BTCUSD" }, { kind: "pon", name: "PONKE" }, { kind: "ada", name: "ADAUSD" }, { kind: "pep", name: "PEPE" }] },
];

function Watchlist() {
  return (
    <aside className="relative flex w-[50px] shrink-0 flex-col overflow-hidden border-l-4 border-[#242424] bg-[#0c0c0c] whitespace-nowrap text-[#e2e2e2]">
      <h2 className="flex h-9 shrink-0 items-center gap-2 pl-[11px] text-[10px] font-bold">MET...<Chevron /></h2>
      <div className="flex h-[23px] shrink-0 items-center gap-1 pl-[11px] text-[7px] font-bold">
        <button type="button" className="size-4 shrink-0 rounded-full border border-[#444]">F</button>
        <button type="button" className="size-4 shrink-0 rounded-full bg-white text-[#222]">M</button>
      </div>
      <div className="flex h-[25px] shrink-0 items-center border-b border-[#2b2b2b] pt-px text-[10px] font-medium text-[#858585]">
        <svg viewBox="0 0 9 10" className="mr-[3px] h-2.5 w-[9px] shrink-0" fill="#444" aria-hidden="true"><path d="M0 0H9L6.500 5 9 10H0Z" /></svg>
        Símbolo
      </div>
      <div className="h-[5px] shrink-0" />
      {groups.map((g, gi) => (
        <div key={gi} className="shrink-0">
          {g.title && (
            <h3 className="flex h-7 items-center gap-2.5 pt-1 pl-3.5 text-[9px] font-medium text-[#7c7c7c]"><Chevron />{g.title}</h3>
          )}
          <ul className="text-[10px] font-semibold">
            {g.rows.map((r, i) =>
              r.mark === "sel" ? (
                <li key={i} className="-mr-2 flex h-[22px] items-center gap-1 rounded border border-[#b5b5b5] pl-2.5"><Coin kind={r.kind} />{r.name}</li>
              ) : r.mark === "flag" ? (
                <li key={i} className="flex h-[22px] items-center gap-1 border-b border-[#1e1e1e]">
                  <svg viewBox="0 0 9 10" className="-mr-0.5 h-2.5 w-[9px] shrink-0" fill="#2f6be6" aria-hidden="true"><path d="M0 0H9L6.500 5 9 10H0Z" /></svg>
                  <Coin kind={r.kind} />{r.name}
                </li>
              ) : (
                <li key={i} className="flex h-[22px] items-center gap-1 border-b border-[#1e1e1e] pl-[11px]"><Coin kind={r.kind} />{r.name}</li>
              ),
            )}
          </ul>
        </div>
      ))}
      <div className="absolute inset-x-0 bottom-0 h-[11px] border-t-2 border-[#2b2b2b] bg-[#0c0c0c]" />
      <button type="button" aria-label="Ocultar panel" className="absolute bottom-5 -left-1 h-4 w-1.5 rounded-r bg-[#151515] text-[8px] leading-4">›</button>
    </aside>
  );
}

export default function App() {
  return (
    <div className="flex h-screen flex-col overflow-hidden bg-[#3a3a3a] font-['Open_Sans','Noto_Sans',sans-serif]">
      <BookmarksBar />
      <div className="ml-[3px] flex min-h-0 flex-1 flex-col">
        <TopBar />
        <div className="flex min-h-0 flex-1 border-t-[3px] border-[#242424] bg-[#0c0c0c]">
          <Sidebar />
          <main className="flex min-w-0 flex-1 flex-col">
            <Chart />
            <RangeBar />
            <PanelTabs />
          </main>
          <Watchlist />
        </div>
      </div>
    </div>
  );
}
